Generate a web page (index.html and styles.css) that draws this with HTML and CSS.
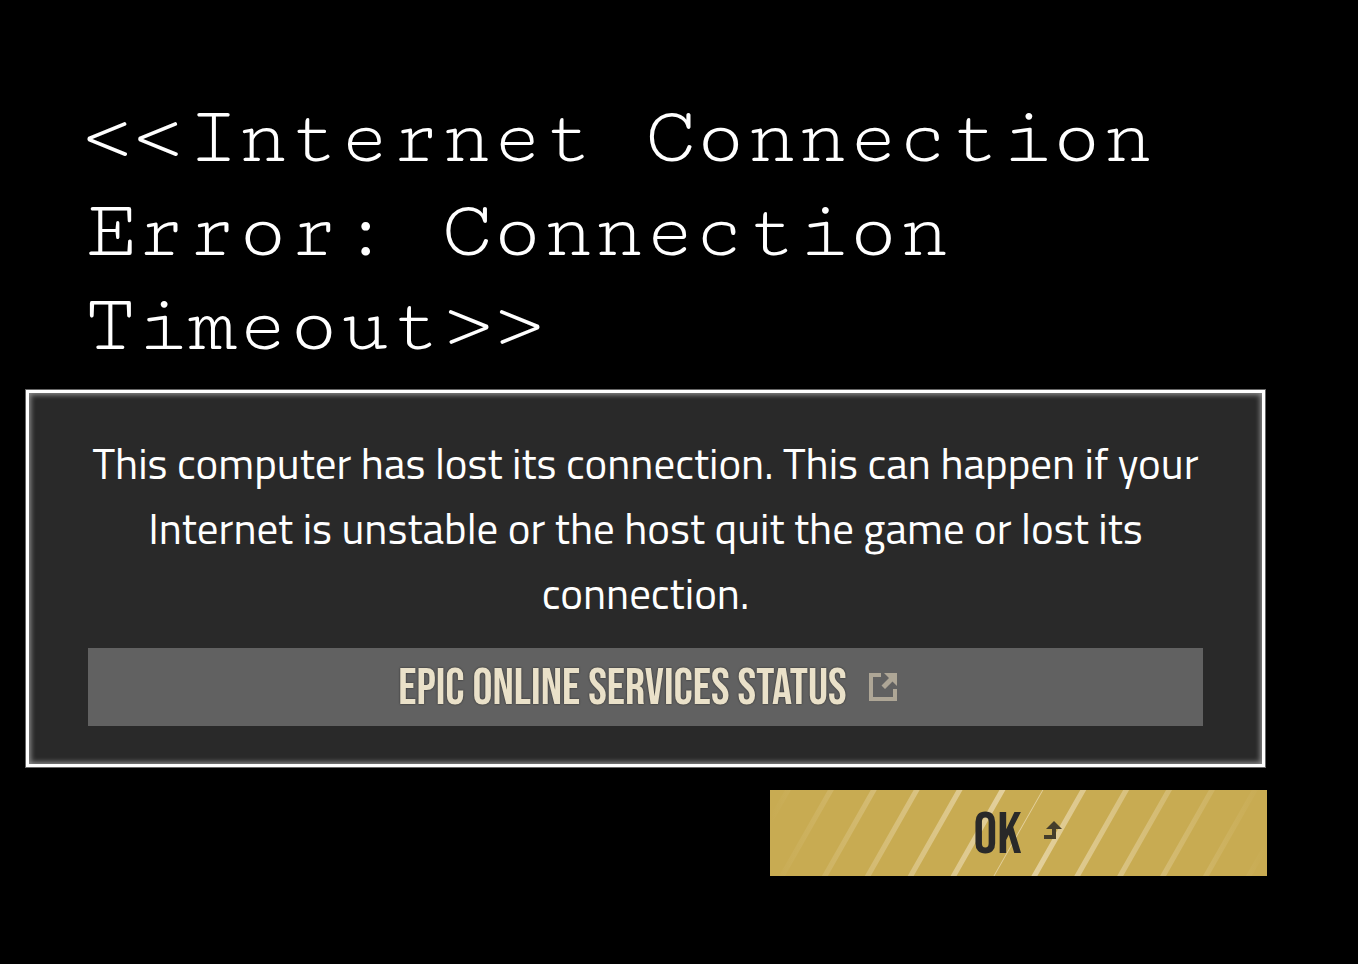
FILE: index.html
```html
<!DOCTYPE html>
<html lang="en">
<head>
<meta charset="utf-8">
<meta name="viewport" content="width=device-width, initial-scale=1">
<title>Internet Connection Error</title>
<link rel="stylesheet" href="styles.css">
</head>
<body>
<main class="dialog">
  <h1 class="title">&lt;&lt;Internet Connection Error: Connection Timeout&gt;&gt;</h1>
  <section class="panel">
    <p class="message">This computer has lost its connection. This can happen if your Internet is unstable or the host quit the game or lost its connection.</p>
    <a class="status" href="#">
      <span class="status-label">EPIC ONLINE SERVICES STATUS</span>
      <svg class="external" viewBox="0 0 28 28" aria-hidden="true"><path d="M0 0H12V4H4V24H24V16H28V28H0ZM15 0H28V13L23.500 8.500L16 16L12.500 12.500L20 5Z"/></svg>
    </a>
  </section>
  <button class="ok" type="button">
    <svg class="stripes" viewBox="0 0 498 86" preserveAspectRatio="none" aria-hidden="true">
      <defs>
        <linearGradient id="fade" gradientUnits="userSpaceOnUse" x1="0" x2="498" y1="0" y2="0">
          <stop offset="0" stop-color="#f4e7cb" stop-opacity="0"/>
          <stop offset=".5" stop-color="#f4e7cb" stop-opacity=".65"/>
          <stop offset="1" stop-color="#f4e7cb" stop-opacity="0"/>
        </linearGradient>
      </defs>
      <path fill="url(#fade)" d="M15 0h6l-49 86h-6zM58 0h6l-49 86h-6zM101 0h6l-49 86h-6zM144 0h6l-49 86h-6zM187 0h6l-49 86h-6zM230 0h6l-49 86h-6zM273 0h1l-49 86h-1zM311 0h6l-49 86h-6zM354 0h6l-49 86h-6zM397 0h6l-49 86h-6zM440 0h6l-49 86h-6zM483 0h6l-49 86h-6zM526 0h6l-49 86h-6z"/>
    </svg>
    <span class="ok-label">OK</span>
    <svg class="enter" viewBox="0 0 18 18" aria-hidden="true"><path d="M10 0L18 8H12V18H0V14H8V8H2Z"/></svg>
  </button>
</main>
</body>
</html>
```
FILE: styles.css
```css
* { box-sizing: border-box; }
body {
  margin: 0;
  background: #000;
  color: #fff;
  font-family: "Titillium Web", Roboto, sans-serif;
}
.dialog {
  display: flex;
  flex-direction: column;
  padding: 91px 91px 88px 25px;
}
.title {
  margin: 0 0 16px;
  padding: 0 60px;
  font: 400 84px/94px "Cutive Mono", FreeMono, "Liberation Mono", monospace;
}
.panel {
  margin-right: 1px;
  padding: 38px 59px 38px;
  border: 4px solid #fff;
  outline: 1px solid #666;
  outline-offset: -1px;
  background: #292929;
  box-shadow: inset 0 0 5px 2px #8a8a8a;
}
.message {
  margin: 0 0 22px;
  font-size: 43px;
  line-height: 65px;
  text-align: center;
}
.status {
  display: flex;
  align-items: center;
  justify-content: center;
  gap: 22px;
  min-height: 78px;
  padding-left: 4px;
  background: #616161;
  color: #eae1c9;
  font: 400 50px/60px "Bebas Neue", "Roboto Condensed", "Liberation Sans Narrow", sans-serif;
  text-decoration: none;
  text-shadow: 0 0 2px #222;
}
.status-label { padding-top: 4px; }
.external { width: 28px; height: 28px; fill: #aea696; }
.ok {
  position: relative;
  display: flex;
  align-items: center;
  justify-content: center;
  align-self: flex-end;
  gap: 22px;
  width: 40%;
  min-height: 86px;
  margin-top: 22px;
  padding: 0 2px 0 0;
  border: 0;
  background: #c8ab52;
  color: #292929;
  font: 400 59px/60px "Bebas Neue", "Roboto Condensed", "Liberation Sans Narrow", sans-serif;
}
.stripes { position: absolute; inset: 0; width: 100%; height: 100%; }
.ok-label, .enter { position: relative; }
.ok-label { padding-top: 6px; }
.enter { width: 18px; height: 18px; margin-bottom: 6px; fill: #453e2b; }
```
